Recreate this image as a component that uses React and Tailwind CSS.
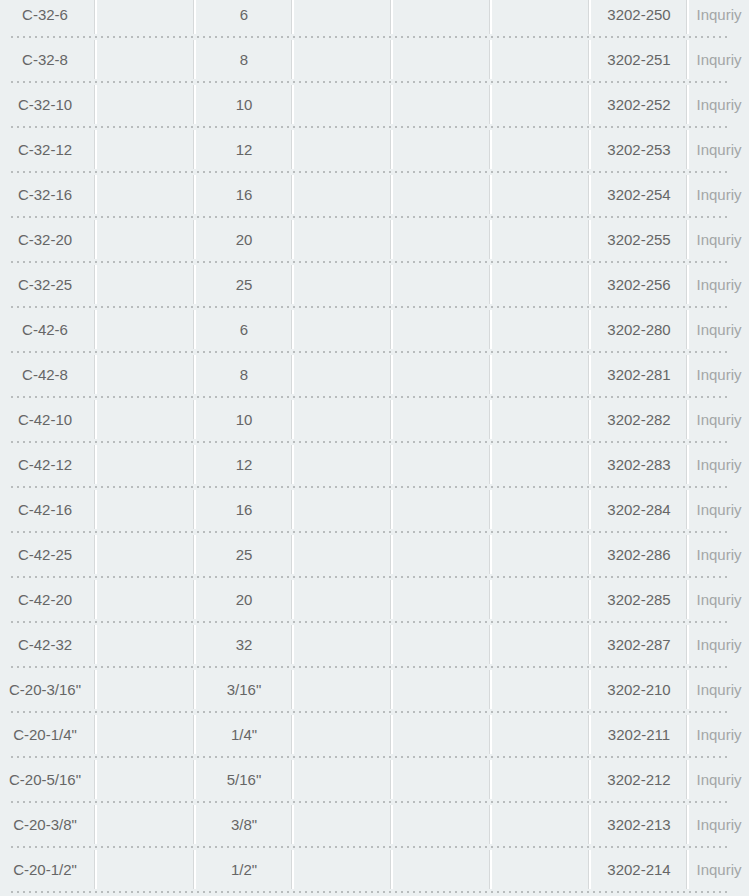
import React from "react";

const rows = [
  ["C-32-6", "6", "3202-250"],
  ["C-32-8", "8", "3202-251"],
  ["C-32-10", "10", "3202-252"],
  ["C-32-12", "12", "3202-253"],
  ["C-32-16", "16", "3202-254"],
  ["C-32-20", "20", "3202-255"],
  ["C-32-25", "25", "3202-256"],
  ["C-42-6", "6", "3202-280"],
  ["C-42-8", "8", "3202-281"],
  ["C-42-10", "10", "3202-282"],
  ["C-42-12", "12", "3202-283"],
  ["C-42-16", "16", "3202-284"],
  ["C-42-25", "25", "3202-286"],
  ["C-42-20", "20", "3202-285"],
  ["C-42-32", "32", "3202-287"],
  ["C-20-3/16\"", "3/16\"", "3202-210"],
  ["C-20-1/4\"", "1/4\"", "3202-211"],
  ["C-20-5/16\"", "5/16\"", "3202-212"],
  ["C-20-3/8\"", "3/8\"", "3202-213"],
  ["C-20-1/2\"", "1/2\"", "3202-214"],
];

function Cell({ children, first, className = "" }) {
  return (
    <div className="h-[43px] py-[2px]">
      <div
        className={
          "h-full flex items-center justify-center pt-[2px] " +
          (first ? "" : "border-l-2 border-white shadow-[-1px_0_0_#d6d9da] ") +
          className
        }
      >
        {children}
      </div>
    </div>
  );
}

export default function App() {
  return (
    <div
      className="w-[749px] h-[896px] overflow-hidden bg-[#ecf0f1] text-[15px] text-[#666666]"
      style={{ fontFamily: '"Liberation Sans", Arial, sans-serif' }}
    >
      <div className="-mt-[7px]">
        {rows.map((r, i) => (
          <div key={i}>
            <div className="grid grid-cols-[95px_99px_98px_99px_99px_99px_98px_1fr]">
              <Cell first className="pr-[5px]">{r[0]}</Cell>
              <Cell />
              <Cell>{r[1]}</Cell>
              <Cell />
              <Cell />
              <Cell />
              <Cell>{r[2]}</Cell>
              <Cell className="text-[#a3a6a7]">Inquriy</Cell>
            </div>
            <div className="ml-[11px] w-[717px] h-[2px] bg-[linear-gradient(to_right,#b8bcbd_2px,transparent_2px)] bg-[length:6px_2px] bg-repeat-x" />
          </div>
        ))}
      </div>
    </div>
  );
}
